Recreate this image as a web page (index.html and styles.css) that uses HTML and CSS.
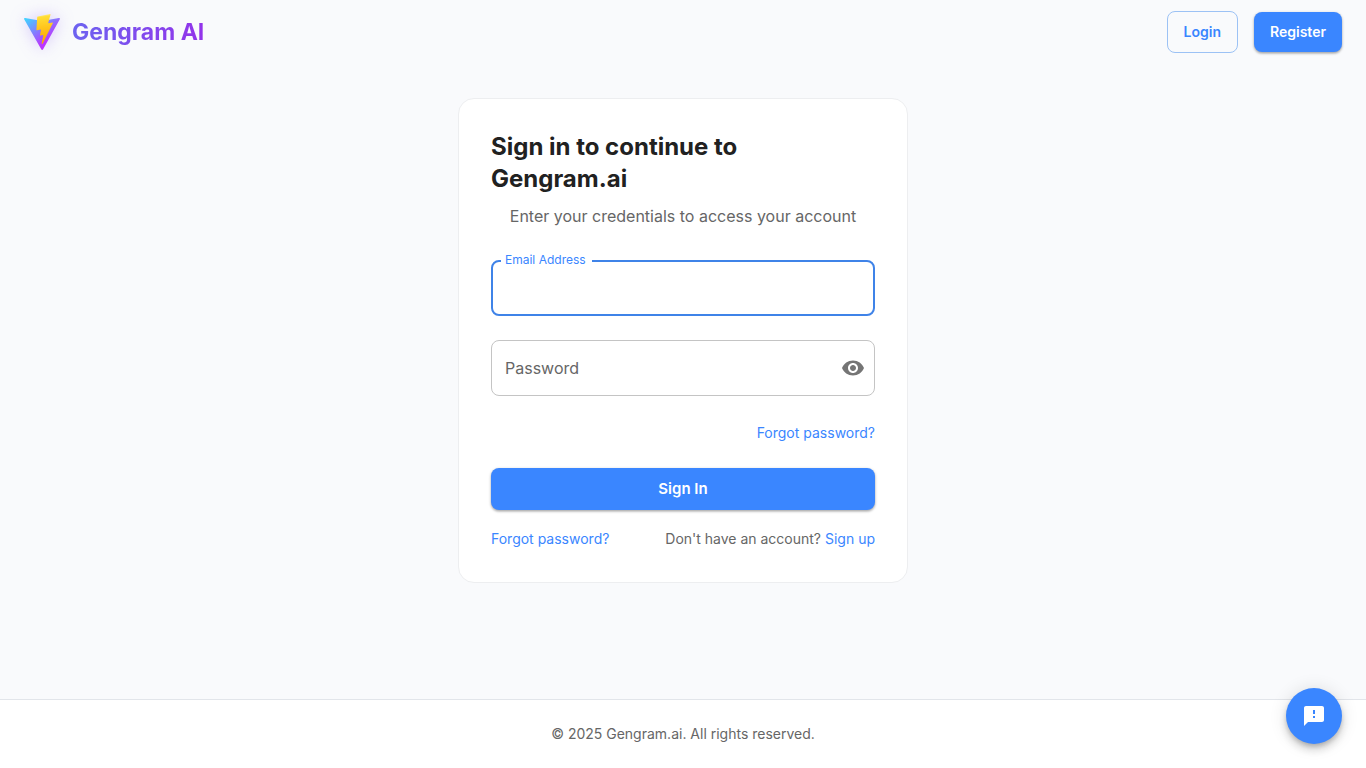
FILE: index.html
```html
<!DOCTYPE html>
<html lang="en">
<head>
    <meta charset="UTF-8">
    <meta name="viewport" content="width=device-width, initial-scale=1.0">
    <title>Gengram AI</title>
    <link rel="stylesheet" href="styles.css">
</head>
<body>
<header class="header">
    <a class="brand" href="/">
        <svg class="brand-logo" viewBox="0 0 256 257" aria-hidden="true">
            <defs>
                <linearGradient id="logo-back" x1="-.828%" x2="57.636%" y1="7.652%" y2="78.411%">
                    <stop offset="0%" stop-color="#41D1FF"></stop>
                    <stop offset="100%" stop-color="#BD34FE"></stop>
                </linearGradient>
                <linearGradient id="logo-bolt" x1="43.376%" x2="50.316%" y1="2.242%" y2="89.03%">
                    <stop offset="0%" stop-color="#FFEA83"></stop>
                    <stop offset="8.333%" stop-color="#FFDD35"></stop>
                    <stop offset="100%" stop-color="#FFA800"></stop>
                </linearGradient>
            </defs>
            <path fill="url(#logo-back)" d="M255.153 37.938L134.897 252.976c-2.483 4.44-8.862 4.466-11.382.048L.875 37.958c-2.746-4.814 1.371-10.646 6.827-9.67l120.385 21.517a6.537 6.537 0 0 0 2.322-.004l117.867-21.483c5.438-.991 9.574 4.796 6.877 9.62Z"></path>
            <path fill="url(#logo-bolt)" d="M185.432.063L96.44 17.501a3.268 3.268 0 0 0-2.634 3.014l-5.474 92.456a3.268 3.268 0 0 0 3.997 3.378l24.777-5.718c2.318-.535 4.413 1.507 3.936 3.838l-7.361 36.047c-.495 2.426 1.782 4.5 4.151 3.78l15.304-4.649c2.372-.72 4.652 1.36 4.15 3.788l-11.698 56.621c-.732 3.542 3.979 5.473 5.943 2.437l1.313-2.028l72.516-144.72c1.215-2.423-.88-5.186-3.54-4.672l-25.505 4.922c-2.396.462-4.435-1.77-3.759-4.114l16.646-57.705c.677-2.35-1.37-4.583-3.769-4.113Z"></path>
        </svg>
        <span class="brand-name">Gengram AI</span>
    </a>
    <nav class="header-actions">
        <button type="button" class="btn btn-outlined">Login</button>
        <button type="button" class="btn btn-primary">Register</button>
    </nav>
</header>

<main class="main">
    <form class="card">
        <h1>Sign in to continue to Gengram.ai</h1>
        <p class="subtitle">Enter your credentials to access your account</p>
        <div class="field field-active">
            <label for="email">Email Address</label>
            <input type="email" id="email">
        </div>
        <div class="field">
            <input type="password" id="password" placeholder="Password" aria-label="Password">
            <button type="button" class="toggle-password" aria-label="Show password">
                <svg viewBox="0 0 24 24" aria-hidden="true">
                    <path d="M12 4.5C7 4.5 2.73 7.61 1 12c1.73 4.39 6 7.5 11 7.5s9.27-3.11 11-7.5c-1.73-4.39-6-7.5-11-7.5M12 17c-2.76 0-5-2.24-5-5s2.24-5 5-5 5 2.24 5 5-2.24 5-5 5m0-8c-1.66 0-3 1.34-3 3s1.34 3 3 3 3-1.34 3-3-1.34-3-3-3"></path>
                </svg>
            </button>
        </div>
        <a class="link forgot" href="/forgot-password">Forgot password?</a>
        <button type="submit" class="btn btn-primary btn-large">Sign In</button>
        <div class="card-links">
            <a class="link" href="/forgot-password">Forgot password?</a>
            <p>Don't have an account? <a class="link" href="/register">Sign up</a></p>
        </div>
    </form>
</main>

<footer class="footer">© 2025 Gengram.ai. All rights reserved.</footer>

<button type="button" class="feedback" aria-label="Send feedback">
    <svg viewBox="0 0 24 24" aria-hidden="true">
        <path d="M20 2H4c-1.1 0-1.99.9-1.99 2L2 22l4-4h14c1.1 0 2-.9 2-2V4c0-1.1-.9-2-2-2m-7 12h-2v-2h2zm0-4h-2V6h2z"></path>
    </svg>
</button>
</body>
</html>
```
FILE: styles.css
```css
* {
    box-sizing: border-box;
}
body {
    display: flex;
    flex-direction: column;
    min-height: 100vh;
    margin: 0;
    font-family: Inter, Arial, sans-serif;
    font-size: 14px;
    line-height: 20px;
    color: #666;
    background-color: #f9fafc;
}
h1, p {
    margin: 0;
}

/* Header */
.header {
    display: flex;
    align-items: center;
    justify-content: space-between;
    height: 64px;
    padding: 0 24px;
}
.brand {
    display: flex;
    align-items: center;
    gap: 12px;
    text-decoration: none;
}
.brand-logo {
    width: 36px;
    height: 36px;
    filter: drop-shadow(0 0 8px rgba(139, 92, 246, 0.3));
}
.brand-name {
    font-size: 23px;
    font-weight: 700;
    line-height: 32px;
    color: transparent;
    background-image: linear-gradient(90deg, #6c63f0, #9333ea);
    background-clip: text;
    -webkit-background-clip: text;
}
.header-actions {
    display: flex;
    align-items: center;
    gap: 16px;
}

/* Buttons */
.btn {
    padding: 8px 16px;
    border: none;
    border-radius: 8px;
    font-family: inherit;
    font-size: 14px;
    font-weight: 600;
    line-height: 24px;
    cursor: pointer;
}
.btn-primary {
    color: #fff;
    background-color: #3a86ff;
    box-shadow: 0 1px 3px rgba(0, 0, 0, 0.3), 0 2px 2px rgba(0, 0, 0, 0.1);
}
.btn-primary:hover {
    background-color: #2563eb;
}
.btn-outlined {
    border: 1px solid #9cc2f5;
    color: #3a86ff;
    background-color: transparent;
}
.btn-large {
    width: 100%;
    height: 42px;
    margin-bottom: 18px;
    font-size: 15px;
}

/* Sign in card */
.main {
    flex: 1;
    padding: 34px 16px;
}
.card {
    display: flex;
    flex-direction: column;
    max-width: 450px;
    margin: 0 auto;
    padding: 32px;
    border: 1px solid #edeef0;
    border-radius: 16px;
    background-color: #fff;
}
h1 {
    margin-bottom: 9px;
    font-size: 24px;
    font-weight: 700;
    line-height: 32px;
    color: #212121;
}
.subtitle {
    margin-bottom: 32px;
    font-size: 16px;
    line-height: 24px;
    text-align: center;
}
.field {
    position: relative;
    display: flex;
    align-items: center;
    height: 56px;
    margin-bottom: 24px;
    padding: 0 9px 0 13px;
    border: 1px solid #c4c4c4;
    border-radius: 8px;
}
.field-active {
    border: 2px solid #3f83e8;
}
/* the label sits on the border and cuts a notch in it */
.field label {
    position: absolute;
    top: -10px;
    left: 8px;
    padding: 0 6px 0 4px;
    font-size: 12px;
    line-height: 16px;
    color: #3a86ff;
    background-color: #fff;
}
.field input {
    flex: 1;
    min-width: 0;
    padding: 0;
    border: none;
    outline: none;
    font-family: inherit;
    font-size: 16px;
    line-height: 24px;
    color: #212121;
    background: none;
}
.field input::placeholder {
    color: #666;
    opacity: 1;
}
.toggle-password {
    display: flex;
    padding: 0;
    border: none;
    color: #757575;
    background: none;
    cursor: pointer;
}
.toggle-password svg,
.feedback svg {
    width: 24px;
    height: 24px;
    fill: currentColor;
}
.link {
    color: #3a86ff;
    text-decoration: none;
}
.link:hover {
    text-decoration: underline;
}
.forgot {
    align-self: flex-end;
    margin: 3px 0 25px;
}
.card-links {
    display: flex;
    justify-content: space-between;
    line-height: 22px;
}

/* Footer */
.footer {
    padding: 24px;
    border-top: 1px solid #e2e5ea;
    text-align: center;
    background-color: #fff;
}
.feedback {
    position: fixed;
    right: 24px;
    bottom: 24px;
    display: flex;
    align-items: center;
    justify-content: center;
    width: 56px;
    height: 56px;
    padding: 0;
    border: none;
    border-radius: 50%;
    color: #fff;
    background-color: #3a86ff;
    box-shadow: 0 3px 5px -1px rgba(0, 0, 0, 0.2), 0 6px 10px rgba(0, 0, 0, 0.14), 0 1px 18px rgba(0, 0, 0, 0.12);
    cursor: pointer;
}
```
